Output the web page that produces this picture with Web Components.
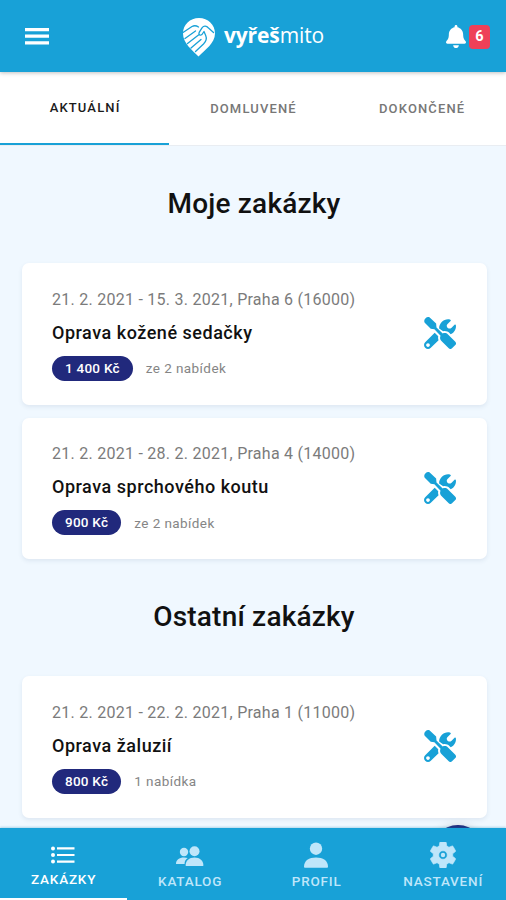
<!DOCTYPE html>
<html lang="cs">
<head>
<meta charset="utf-8">
<title>Vyřešmito</title>
<style>
  html, body { margin: 0; height: 100%; }
  body {
    font-family: Roboto, "Noto Sans", sans-serif;
    color: #111;
    background: #f0f8ff;
    overflow: hidden;
  }
</style>
</head>
<body>
<vm-app>
  <vm-header slot="header" count="6"></vm-header>
  <vm-tabs slot="header">
    <vm-tab active>AKTUÁLNÍ</vm-tab>
    <vm-tab>DOMLUVENÉ</vm-tab>
    <vm-tab>DOKONČENÉ</vm-tab>
  </vm-tabs>

  <vm-section>
    <span slot="title">Moje zakázky</span>
    <vm-job price="1 400 Kč" offers="ze 2 nabídek">
      <span slot="meta">21. 2. 2021 - 15. 3. 2021, Praha 6 (16000)</span>
      Oprava kožené sedačky
    </vm-job>
    <vm-job price="900 Kč" offers="ze 2 nabídek">
      <span slot="meta">21. 2. 2021 - 28. 2. 2021, Praha 4 (14000)</span>
      Oprava sprchového koutu
    </vm-job>
  </vm-section>
  <vm-section>
    <span slot="title">Ostatní zakázky</span>
    <vm-job price="800 Kč" offers="1 nabídka">
      <span slot="meta">21. 2. 2021 - 22. 2. 2021, Praha 1 (11000)</span>
      Oprava žaluzií
    </vm-job>
  </vm-section>

  <vm-nav slot="footer">
    <vm-nav-item icon="list" active>ZAKÁZKY</vm-nav-item>
    <vm-nav-item icon="people">KATALOG</vm-nav-item>
    <vm-nav-item icon="person">PROFIL</vm-nav-item>
    <vm-nav-item icon="gear">NASTAVENÍ</vm-nav-item>
  </vm-nav>
</vm-app>

<script>
const icons = {
  menu: ['0 0 24 17', '<path d="M0 0h24v3.2H0zM0 6.6h24v3.2H0zM0 13.2h24v3.2H0z"/>'],
  bell: ['0 0 448 512', '<path d="M224 512c35.3 0 63.9-28.7 63.9-64H160.100c0 35.300 28.600 64 63.900 64zm215.400-149.700c-19.300-20.800-55.500-52-55.500-154.300 0-77.700-54.500-139.900-127.900-155.200V32c0-17.700-14.300-32-32-32s-32 14.300-32 32v20.800C118.600 68.100 64.100 130.300 64.100 208c0 102.300-36.200 133.500-55.500 154.300-6 6.400-8.700 14.100-8.600 21.700.1 16.400 13 32 32.100 32h383.800c19.100 0 32-15.600 32.100-32 0-7.600-2.600-15.300-8.500-21.700z"/>'],
  tools: ['0 0 512 512', '<path d="M501 396L384 279c-23-23-58-28-85-14L200 166l-6-62L92 8C70-4 42 2 26 18L14 32C2 48 0 72 12 90l96 98 58 6 99 105c-14 28-9 62 14 85l117 117c14 15 38 15 52 0l53-52c15-15 15-38 0-53zM332 225c28 0 55 11 75 31l19 19c16-7 31-16 44-29 31-31 45-72 41-112-2-14-14-16-22-9l-52 50c-14 12-34 14-50 4-18-12-28-34-20-54 2-6 6-10 10-14l48-48c8-8 6-18-5-21-48-12-100 1-137 38-28 29-42 66-41 104l65 44c8-2 17-3 25-3zM228 307l-57-57L19 403c-25 25-25 65 0 90s65 25 90 0l124-123c-8-20-10-42-5-63zM64 478c-17 0-30-13-30-30s13-30 30-30 30 13 30 30-13 30-30 30z"/>'],
  list: ['0 0 24 18', '<circle cx="2" cy="2.400" r="2"/><circle cx="2" cy="9" r="2"/><circle cx="2" cy="15.600" r="2"/><path d="M6 1.300h17.500v2.200H6zM6 7.900h17.500v2.200H6zM6 14.500h17.500v2.200H6z"/>'],
  people: ['0 0 28 20', '<circle cx="8" cy="6" r="4.200"/><path d="M0 18c0-4 3-6.500 8-6.500 1.500 0 2.700.2 3.700.6C9.500 13.500 8.600 15.500 8.600 18z"/><circle cx="18.500" cy="5.200" r="5"/><path d="M9.600 19.500c0-5 3.600-8 8.900-8s8.900 3 8.900 8c0 .3-.2.5-.5.5H10.100c-.3 0-.5-.2-.5-.5z"/>'],
  person: ['0 0 24 26', '<circle cx="12" cy="6.700" r="6.200"/><path d="M0 24.500c0-5.800 5-9 12-9s12 3.200 12 9c0 .9-.4 1.300-1.200 1.300H1.200C.4 25.800 0 25.400 0 24.500z"/>'],
  gear: ['2 2 20 20', '<path fill-rule="evenodd" stroke="currentColor" stroke-width=".5" stroke-linejoin="round" d="M19.430 12.980c.04-.32.07-.64.07-.98s-.03-.66-.07-.98l2.110-1.650c.19-.15.24-.42.12-.64l-2-3.460c-.12-.22-.39-.3-.61-.22l-2.490 1c-.52-.4-1.080-.73-1.690-.98l-.38-2.650C14.460 2.180 14.250 2 14 2h-4c-.25 0-.46.18-.49.42l-.38 2.650c-.61.25-1.170.59-1.690.98l-2.490-1c-.23-.09-.49 0-.61.22l-2 3.460c-.13.22-.07.49.12.64l2.110 1.650c-.04.32-.07.65-.07.98s.03.66.07.98l-2.110 1.650c-.19.15-.24.42-.12.64l2 3.460c.12.22.39.3.61.22l2.490-1c.52.4 1.080.73 1.690.98l.38 2.650c.03.24.24.42.49.42h4c.25 0 .46-.18.49-.42l.38-2.650c.61-.25 1.170-.59 1.690-.98l2.490 1c.23.09.49 0 .61-.22l2-3.460c.12-.22.07-.49-.12-.64zM12 15.300a3.300 3.300 0 1 1 0-6.600 3.300 3.300 0 0 1 0 6.600z"/><circle cx="12" cy="12" r="1.700"/>'],
  logo: ['0 0 32 39', '<path d="M16 0C7 0 0 6.700 0 15.500 0 25 9 32 15.500 38.500 22 32 32 25 32 15.500 32 6.700 25 0 16 0z"/><g fill="none" stroke="#18a1d7" stroke-width="1.300" stroke-linecap="round" stroke-linejoin="round"><path d="M0 14.500L9 8.500c2.500-1.300 4.500-.8 6.500.5"/><path d="M2 20.500l10.500-7.500"/><path d="M4.500 25.500l11-8.500"/><path d="M8 30l10-8.500"/><path d="M12.500 33.500l8-7.500c2.500-2.500 3.500-5.500 2.200-8.500L21 13.500 19 16.500c-2 1.500-3.800 0-2.800-2.200l2.800-4.500c2-2.500 4.500-1.800 6.500.2l5 4.500"/></g>']
};

class VmElement extends HTMLElement {
  constructor() {
    super();
    this.attachShadow({ mode: 'open' });
  }

  connectedCallback() {
    const template = document.createElement('template');
    template.innerHTML = this.render();
    this.shadowRoot.replaceChildren(template.content.cloneNode(true));
  }
}

customElements.define('vm-icon', class extends VmElement {
  render() {
    const [viewBox, body] = icons[this.getAttribute('name')];
    return `
      <style>
        :host { display: block; flex: none; }
        svg { display: block; width: 100%; height: 100%; fill: currentColor; }
      </style>
      <svg viewBox="${viewBox}" preserveAspectRatio="none">${body}</svg>`;
  }
});

customElements.define('vm-app', class extends VmElement {
  render() {
    return `
      <style>
        :host { display: flex; flex-direction: column; height: 100vh; position: relative; }
        header, footer { flex: none; position: relative; z-index: 2; }
        main { flex: 1; min-height: 0; overflow: hidden; padding: 0 19px 0 22px; }
        /* floating button, mostly tucked under the bottom bar */
        .fab {
          position: absolute; right: 20px; bottom: 19px; z-index: 1;
          width: 56px; height: 56px; border-radius: 50%;
          background: #21297c; box-shadow: 0 2px 10px rgba(0, 0, 0, .25);
        }
      </style>
      <header><slot name="header"></slot></header>
      <main><slot></slot></main>
      <div class="fab"></div>
      <footer><slot name="footer"></slot></footer>`;
  }
});

customElements.define('vm-header', class extends VmElement {
  render() {
    return `
      <style>
        :host {
          display: grid; grid-template-columns: 1fr auto 1fr; align-items: center;
          box-sizing: border-box; height: 72px; padding: 0 16px 0 25px;
          color: #fff; background: #18a1d7;
          position: relative; z-index: 1; box-shadow: 0 1px 4px rgba(0, 0, 0, .25);
        }
        .menu { width: 24px; height: 17px; margin-top: 1px; }
        .logo { display: flex; align-items: center; gap: 9px; margin-left: -8px; }
        .logo vm-icon { width: 32px; height: 39px; margin-top: 2px; }
        .name { font: 400 21px/28px "Open Sans", sans-serif; letter-spacing: -.1px; margin-top: -2px; }
        .name b { font-weight: 700; }
        .alerts { display: flex; justify-content: flex-end; align-items: center; gap: 3px; }
        .alerts vm-icon { width: 20px; height: 23px; }
        .count {
          width: 21px; height: 24px; border-radius: 4px; background: #ee4058;
          font: 700 14.500px/23px Roboto, sans-serif; text-align: center; margin-top: 1px;
        }
      </style>
      <vm-icon class="menu" name="menu"></vm-icon>
      <div class="logo"><vm-icon name="logo"></vm-icon><div class="name"><b>vyřeš</b>mito</div></div>
      <div class="alerts"><vm-icon name="bell"></vm-icon><div class="count">${this.getAttribute('count')}</div></div>`;
  }
});

customElements.define('vm-tabs', class extends VmElement {
  render() {
    return `
      <style>
        :host { display: grid; grid-template-columns: repeat(3, 1fr); height: 73px; background: #fff; border-bottom: 1px solid #e9edf2; }
      </style>
      <slot></slot>`;
  }
});

customElements.define('vm-tab', class extends VmElement {
  render() {
    return `
      <style>
        :host {
          display: flex; align-items: center; justify-content: center; padding-left: 1px;
          font-size: 13px; font-weight: 500; letter-spacing: 1.150px; color: #777;
        }
        :host([active]) { color: #1b1b1b; border-bottom: 2px solid #18a1d7; padding: 0 0 1px; }
        :host([active]) slot { display: block; padding-left: 1.500px; }
      </style>
      <slot></slot>`;
  }
});

customElements.define('vm-section', class extends VmElement {
  render() {
    return `
      <style>
        :host { display: block; }
        h2 {
          margin: 0; height: 117px; display: flex; align-items: center; justify-content: center;
          box-sizing: border-box; padding: 0 1px 2px 0;
          font-size: 28px; font-weight: 500; letter-spacing: .2px;
        }
        .jobs { display: flex; flex-direction: column; gap: 13px; }
      </style>
      <h2><slot name="title"></slot></h2>
      <div class="jobs"><slot></slot></div>`;
  }
});

customElements.define('vm-job', class extends VmElement {
  render() {
    return `
      <style>
        :host {
          display: flex; align-items: center; justify-content: space-between;
          box-sizing: border-box; height: 141.500px; padding: 0 31px 0 30px;
          background: #fff; border-radius: 7px; box-shadow: 0 2px 4px rgba(60, 90, 130, .1);
        }
        .meta { font-size: 16px; line-height: 24px; letter-spacing: .26px; color: #7b7b7b; margin-top: 1px; }
        .title { font-size: 18px; line-height: 24px; font-weight: 500; letter-spacing: .52px; margin-top: 9px; }
        .row { display: flex; align-items: center; gap: 13px; margin-top: 11px; }
        .price {
          padding: 0 13px; border-radius: 13px; background: #21297c; color: #fff;
          font-size: 13.500px; line-height: 25px; font-weight: 500; letter-spacing: .25px;
        }
        .offers { font-size: 13.500px; letter-spacing: .42px; color: #858585; }
        vm-icon { width: 32px; height: 32px; color: #18a1d7; margin-bottom: 1px; }
      </style>
      <div>
        <div class="meta"><slot name="meta"></slot></div>
        <div class="title"><slot></slot></div>
        <div class="row">
          <span class="price">${this.getAttribute('price')}</span>
          <span class="offers">${this.getAttribute('offers')}</span>
        </div>
      </div>
      <vm-icon name="tools"></vm-icon>`;
  }
});

customElements.define('vm-nav', class extends VmElement {
  render() {
    return `
      <style>
        :host { display: grid; grid-template-columns: repeat(4, 1fr); height: 72px; background: #18a1d7; box-shadow: 0 -1px 2px rgba(24, 140, 190, .3); }
      </style>
      <slot></slot>`;
  }
});

customElements.define('vm-nav-item', class extends VmElement {
  render() {
    const icon = this.getAttribute('icon');
    return `
      <style>
        :host {
          display: flex; flex-direction: column; align-items: center; justify-content: flex-end;
          box-sizing: border-box; padding: 0 0 10px; gap: 4px;
          font-size: 13.500px; line-height: 18px; font-weight: 500; letter-spacing: .8px; color: #bfe6fa;
        }
        :host([active]) { color: #fff; border-bottom: 2px solid #fff; }
        .list { width: 24px; height: 18px; margin-bottom: 2px; }
        .people { width: 28px; height: 20px; margin-bottom: 2px; }
        .person { width: 24px; height: 26px; }
        .gear { width: 26px; height: 26px; }
        span { padding-left: .8px; }
      </style>
      <vm-icon class="${icon}" name="${icon}"></vm-icon>
      <span><slot></slot></span>`;
  }
});
</script>
</body>
</html>
